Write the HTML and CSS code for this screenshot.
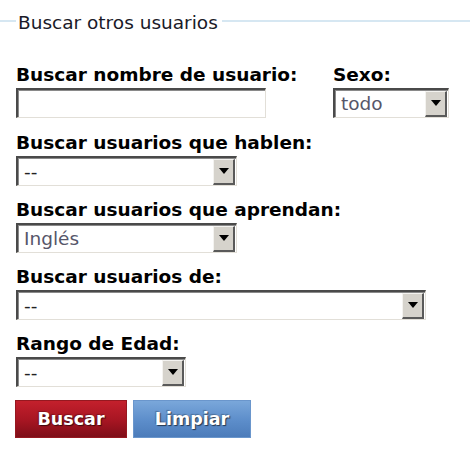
FILE: index.html
```html
<!DOCTYPE html>
<html lang="es">
<head>
<meta charset="utf-8">
<link rel="stylesheet" href="styles.css">
</head>
<body>
<form class="panel">
  <div class="legend"><span class="legend-text">Buscar otros usuarios</span></div>
  <div class="row-top">
    <div class="group name-group">
      <div class="label">Buscar nombre de usuario:</div>
      <div class="textbox w250"></div>
    </div>
    <div class="group">
      <div class="label">Sexo:</div>
      <div class="select w116"><span class="val muted">todo</span><span class="arrow"><i></i></span></div>
    </div>
  </div>
  <div class="group first">
    <div class="label">Buscar usuarios que hablen:</div>
    <div class="select w221"><span class="val">--</span><span class="arrow"><i></i></span></div>
  </div>
  <div class="group">
    <div class="label">Buscar usuarios que aprendan:</div>
    <div class="select w221"><span class="val muted">Inglés</span><span class="arrow"><i></i></span></div>
  </div>
  <div class="group">
    <div class="label">Buscar usuarios de:</div>
    <div class="select w410"><span class="val">--</span><span class="arrow"><i></i></span></div>
  </div>
  <div class="group">
    <div class="label">Rango de Edad:</div>
    <div class="select w170"><span class="val">--</span><span class="arrow"><i></i></span></div>
  </div>
  <div class="buttons">
    <div class="btn btn-red">Buscar</div>
    <div class="btn btn-blue">Limpiar</div>
  </div>
</form>
</body>
</html>
```

FILE: styles.css
```css
html, body {
  margin: 0;
  padding: 0;
  background: #ffffff;
}
body {
  font-family: "DejaVu Sans", "Liberation Sans", sans-serif;
  color: #000;
  width: 470px;
  height: 456px;
  overflow: hidden;
}
.panel {
  display: flex;
  flex-direction: column;
  padding: 0 0 0 16px;
}
.legend {
  position: relative;
  box-sizing: border-box;
  height: 51px;
  margin-left: -16px;
  padding-top: 12px;
  display: flex;
  align-items: flex-start;
}
.legend::before {
  content: "";
  position: absolute;
  left: 0;
  right: 0;
  top: 20px;
  height: 2px;
  background: #d6e7f2;
}
.legend-text {
  position: relative;
  background: #fff;
  margin-left: 16px;
  padding: 0 4px 0 2px;
  font-size: 18.5px;
  line-height: 22px;
  color: #1a1a28;
}
.row-top {
  display: flex;
  gap: 67px;
}
.name-group { width: 250px; }
.group {
  display: flex;
  flex-direction: column;
  margin-top: 14px;
}
.group.first { margin-top: 15px; }
.label {
  font-weight: bold;
  font-size: 18.5px;
  line-height: 20px;
  margin-bottom: 3px;
  color: #000;
  white-space: nowrap;
}
.textbox, .select {
  box-sizing: border-box;
  height: 30px;
  background: #fff;
  border-top: 2px solid #4a4a4a;
  border-left: 2px solid #4a4a4a;
  border-right: 1px solid #e2dfd8;
  border-bottom: 1px solid #e2dfd8;
  box-shadow: inset 1px 1px 0 #8a8a8a;
}
.select {
  display: flex;
  align-items: center;
  justify-content: space-between;
}
.w250 { width: 250px; }
.w116 { width: 116px; }
.w221 { width: 221px; }
.w410 { width: 410px; }
.w170 { width: 170px; }
.val {
  font-size: 18.5px;
  line-height: 26px;
  padding-left: 6px;
  color: #222;
}
.muted { color: #56566a; }
.arrow {
  box-sizing: border-box;
  width: 22px;
  height: 26px;
  margin-right: 1px;
  background: #d6d3cc;
  border-top: 1px solid #f4f3f0;
  border-left: 1px solid #f4f3f0;
  border-right: 2px solid #5a5a5a;
  border-bottom: 2px solid #5a5a5a;
  display: flex;
  align-items: center;
  justify-content: center;
}
.arrow i {
  width: 0;
  height: 0;
  border-left: 5px solid transparent;
  border-right: 5px solid transparent;
  border-top: 6px solid #000;
}
.buttons {
  display: flex;
  gap: 6px;
  margin-top: 13px;
  margin-left: -1px;
}
.btn {
  box-sizing: border-box;
  height: 38px;
  display: flex;
  align-items: center;
  justify-content: center;
  font-weight: bold;
  font-size: 17.5px;
  color: #fff;
  text-shadow: 1px 1px 1px rgba(0,0,0,0.6), -1px -1px 1px rgba(0,0,0,0.25);
}
.btn-red {
  width: 112px;
  background: linear-gradient(#c4202c, #a61522 55%, #7e0e18);
  border: 1px solid #961820;
}
.btn-blue {
  width: 118px;
  background: linear-gradient(#7aa7da, #5c8dca 55%, #4c7cba);
  border: 1px solid #6a96cc;
}
```
